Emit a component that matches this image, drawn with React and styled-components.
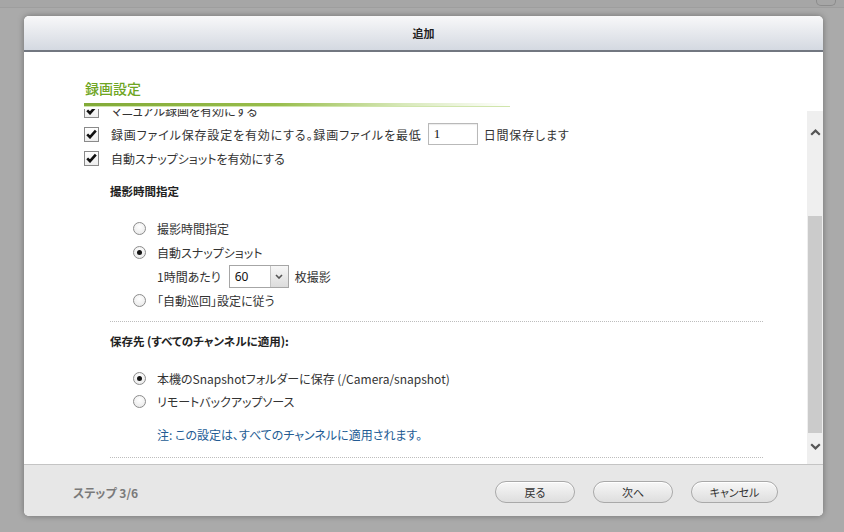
import React from "react";
import styled, { createGlobalStyle } from "styled-components";

const GlobalStyle = createGlobalStyle`
  html, body {
    margin: 0;
    padding: 0;
    background: #aaaaaa;
  }
  body {
    font-family: "Noto Sans CJK JP", "Noto Sans", sans-serif;
    font-size: 12px;
    color: #333;
    font-feature-settings: "palt";
  }
`;

const Page = styled.div`
  width: 844px;
  height: 532px;
  overflow: hidden;
  background: #aaaaaa;
`;

const TopStrip = styled.div`
  height: 7px;
  background: #a6a6a6;
  border-bottom: 1px solid #9e9e9e;
  display: flex;
  justify-content: flex-end;
  padding-right: 8px;
`;

const StripButton = styled.div`
  width: 18px;
  height: 5px;
  border: 1px solid #8c8c8c;
  border-top: none;
  border-radius: 0 0 5px 5px;
`;

const Dialog = styled.div`
  margin: 8px 0 0 24px;
  width: 799px;
  height: 500px;
  border-radius: 5px;
  background: #fff;
  box-shadow: 0 0 6px rgba(0, 0, 0, 0.35);
  display: flex;
  flex-direction: column;
  overflow: hidden;
`;

const Header = styled.div`
  height: 34px;
  flex: none;
  border-bottom: 2px solid #727780;
  background: linear-gradient(#f8f8f9, #d4d9e1);
  display: flex;
  align-items: center;
  justify-content: center;
  font-weight: bold;
  font-size: 11px;
  color: #222;
`;

const Body = styled.div`
  flex: 1;
  min-height: 0;
  display: flex;
  flex-direction: column;
  padding-left: 60px;
`;

const Title = styled.div`
  margin-top: 28px;
  height: 16px;
  line-height: 16px;
  font-size: 14px;
  font-weight: 500;
  color: #6ea522;
  padding-left: 1px;
`;

const GreenBar = styled.div`
  margin-top: 7px;
  width: 426px;
  height: 3px;
  flex: none;
  background: linear-gradient(to right, #82aa38 0%, #98bd4b 45%, rgba(190, 218, 140, 0.6) 75%, rgba(255, 255, 255, 0) 100%);
  border-bottom: 1px solid #d0e5ac;
`;

const ScrollArea = styled.div`
  flex: 1;
  min-height: 0;
  margin-top: 2px;
  display: flex;
  overflow: hidden;
`;

const Content = styled.div`
  flex: 1;
  margin-top: -11px;
`;

const CheckRow = styled.div`
  height: 24px;
  display: flex;
  align-items: center;
  gap: 12px;
`;

const Box = styled.span`
  width: 13px;
  height: 13px;
  flex: none;
  border: 1px solid #8a8a8a;
  background: linear-gradient(#ffffff, #eeeeee);
  display: flex;
  align-items: center;
  justify-content: center;
`;

const Inline = styled.span`
  display: flex;
  align-items: center;
  gap: 6px;
  letter-spacing: 0.85px;
`;

const DaysInput = styled.span`
  width: 43px;
  height: 20px;
  border: 1px solid #b9b9b9;
  box-shadow: inset 0 1px 1px rgba(0, 0, 0, 0.08);
  font-family: "Liberation Serif", serif;
  font-size: 13px;
  line-height: 20px;
  padding-left: 5px;
  box-sizing: content-box;
  color: #111;
  letter-spacing: 0;
`;

const SubHeading = styled.div`
  margin: ${(p) => p.$top}px 0 0 26px;
  height: 16px;
  line-height: 16px;
  font-weight: bold;
  font-size: 11.5px;
  color: #222;
`;

const RadioRow = styled.div`
  height: ${(p) => p.$h || 24}px;
  margin-top: ${(p) => p.$top || 0}px;
  padding-left: 49px;
  display: flex;
  align-items: center;
  gap: 11px;
`;

const Circle = styled.span`
  width: 11px;
  height: 11px;
  flex: none;
  border-radius: 50%;
  border: 1px solid #8c8c8c;
  background: radial-gradient(circle at 50% 35%, #ffffff, #e6e6e6);
  display: flex;
  align-items: center;
  justify-content: center;
  &::after {
    content: "";
    width: 5px;
    height: 5px;
    border-radius: 50%;
    background: #151515;
    display: ${(p) => (p.$on ? "block" : "none")};
  }
`;

const SubRow = styled.div`
  height: 24px;
  padding-left: 73px;
  display: flex;
  align-items: center;
  gap: 6px;
`;

const Select = styled.span`
  width: 58px;
  height: 21px;
  margin-left: 2px;
  border: 1px solid #a6a6a6;
  display: flex;
  align-items: stretch;
  background: #fff;
`;

const SelectValue = styled.span`
  flex: 1;
  padding-left: 5px;
  font-family: "Noto Sans", sans-serif;
  font-size: 12px;
  line-height: 21px;
  color: #111;
`;

const SelectButton = styled.span`
  width: 17px;
  border-left: 1px solid #c4c4c4;
  background: linear-gradient(#f7f7f7, #dcdcdc);
  display: flex;
  align-items: center;
  justify-content: center;
`;

const Dotted = styled.div`
  margin: ${(p) => p.$top}px 44px 0 26px;
  border-top: 1px dotted #bdbdbd;
`;

const Note = styled.div`
  margin: 14px 0 0 73px;
  height: 16px;
  line-height: 16px;
  color: #235c94;
`;

const Scrollbar = styled.div`
  width: 16px;
  flex: none;
  margin-top: 2px;
  background: #efefef;
  display: flex;
  flex-direction: column;
`;

const ArrowCell = styled.div`
  height: ${(p) => p.$h}px;
  flex: ${(p) => (p.$grow ? 1 : "none")};
  display: flex;
  justify-content: center;
  padding-top: ${(p) => p.$pad}px;
  box-sizing: border-box;
`;

const Thumb = styled.div`
  height: 217px;
  margin: 0 1px;
  background: #cbcbcb;
`;

const Footer = styled.div`
  height: 48px;
  flex: none;
  border-top: 1px solid #c4c4c4;
  background: #e7e7e7;
  display: flex;
  align-items: center;
  padding: 3px 45px 0 49px;
`;

const Step = styled.div`
  flex: 1;
  font-weight: bold;
  font-size: 12px;
  color: #7a7a7a;
`;

const Buttons = styled.div`
  display: flex;
  gap: 18px;
`;

const PillButton = styled.div`
  box-sizing: border-box;
  width: ${(p) => p.$w}px;
  height: 22px;
  border: 1px solid #a9a9a9;
  border-radius: 11px;
  background: linear-gradient(#f7f7f7, #dedede);
  box-shadow: inset 0 1px 0 #ffffff;
  display: flex;
  align-items: center;
  justify-content: center;
  font-size: 11px;
  color: #333;
`;

const Check = () => (
  <svg width="11" height="10" viewBox="0 0 11 10">
    <path d="M1.2 5.4 L4 8.2 L9.8 1.6" fill="none" stroke="#111" strokeWidth="2.6" />
  </svg>
);

const Chevron = ({ down }) => (
  <svg width="11" height="7" viewBox="0 0 11 7">
    <path
      d={down ? "M1.2 1.3 L5.5 5.4 L9.8 1.3" : "M1.2 5.7 L5.5 1.6 L9.8 5.7"}
      fill="none"
      stroke="#555"
      strokeWidth="2.2"
    />
  </svg>
);

const SmallChevron = () => (
  <svg width="8" height="5" viewBox="0 0 8 5">
    <path d="M1 1 L4 4 L7 1" fill="none" stroke="#555" strokeWidth="1.6" />
  </svg>
);

const CheckItem = ({ children }) => (
  <CheckRow>
    <Box>
      <Check />
    </Box>
    {children}
  </CheckRow>
);

const RadioItem = ({ on, h, top, children }) => (
  <RadioRow $h={h} $top={top}>
    <Circle $on={on} />
    <span>{children}</span>
  </RadioRow>
);

export default function App() {
  return (
    <Page>
      <GlobalStyle />
      <TopStrip>
        <StripButton />
      </TopStrip>
      <Dialog>
        <Header>追加</Header>
        <Body>
          <Title>録画設定</Title>
          <GreenBar />
          <ScrollArea>
            <Content>
              <CheckItem>マニュアル録画を有効にする</CheckItem>
              <CheckItem>
                <Inline>
                  録画ファイル保存設定を有効にする。録画ファイルを最低
                  <DaysInput>1</DaysInput>
                  日間保存します
                </Inline>
              </CheckItem>
              <CheckItem>自動スナップショットを有効にする</CheckItem>

              <SubHeading $top={13}>撮影時間指定</SubHeading>
              <RadioItem top={17}>撮影時間指定</RadioItem>
              <RadioItem on>自動スナップショット</RadioItem>
              <SubRow>
                1時間あたり
                <Select>
                  <SelectValue>60</SelectValue>
                  <SelectButton>
                    <SmallChevron />
                  </SelectButton>
                </Select>
                枚撮影
              </SubRow>
              <RadioItem>「自動巡回」設定に従う</RadioItem>
              <Dotted $top={9} />

              <SubHeading $top={11}>保存先 (すべてのチャンネルに適用):</SubHeading>
              <RadioItem on top={17}>
                本機のSnapshotフォルダーに保存 (/Camera/snapshot)
              </RadioItem>
              <RadioItem h={23}>リモートバックアップソース</RadioItem>
              <Note>注: この設定は、すべてのチャンネルに適用されます。</Note>
              <Dotted $top={14} />
            </Content>
            <Scrollbar>
              <ArrowCell $h={42} $pad={18}>
                <Chevron />
              </ArrowCell>
              <ArrowCell $h={63} />
              <Thumb />
              <ArrowCell $grow $pad={10}>
                <Chevron down />
              </ArrowCell>
            </Scrollbar>
          </ScrollArea>
        </Body>
        <Footer>
          <Step>ステップ 3/6</Step>
          <Buttons>
            <PillButton $w={80}>戻る</PillButton>
            <PillButton $w={80}>次へ</PillButton>
            <PillButton $w={87}>キャンセル</PillButton>
          </Buttons>
        </Footer>
      </Dialog>
    </Page>
  );
}
